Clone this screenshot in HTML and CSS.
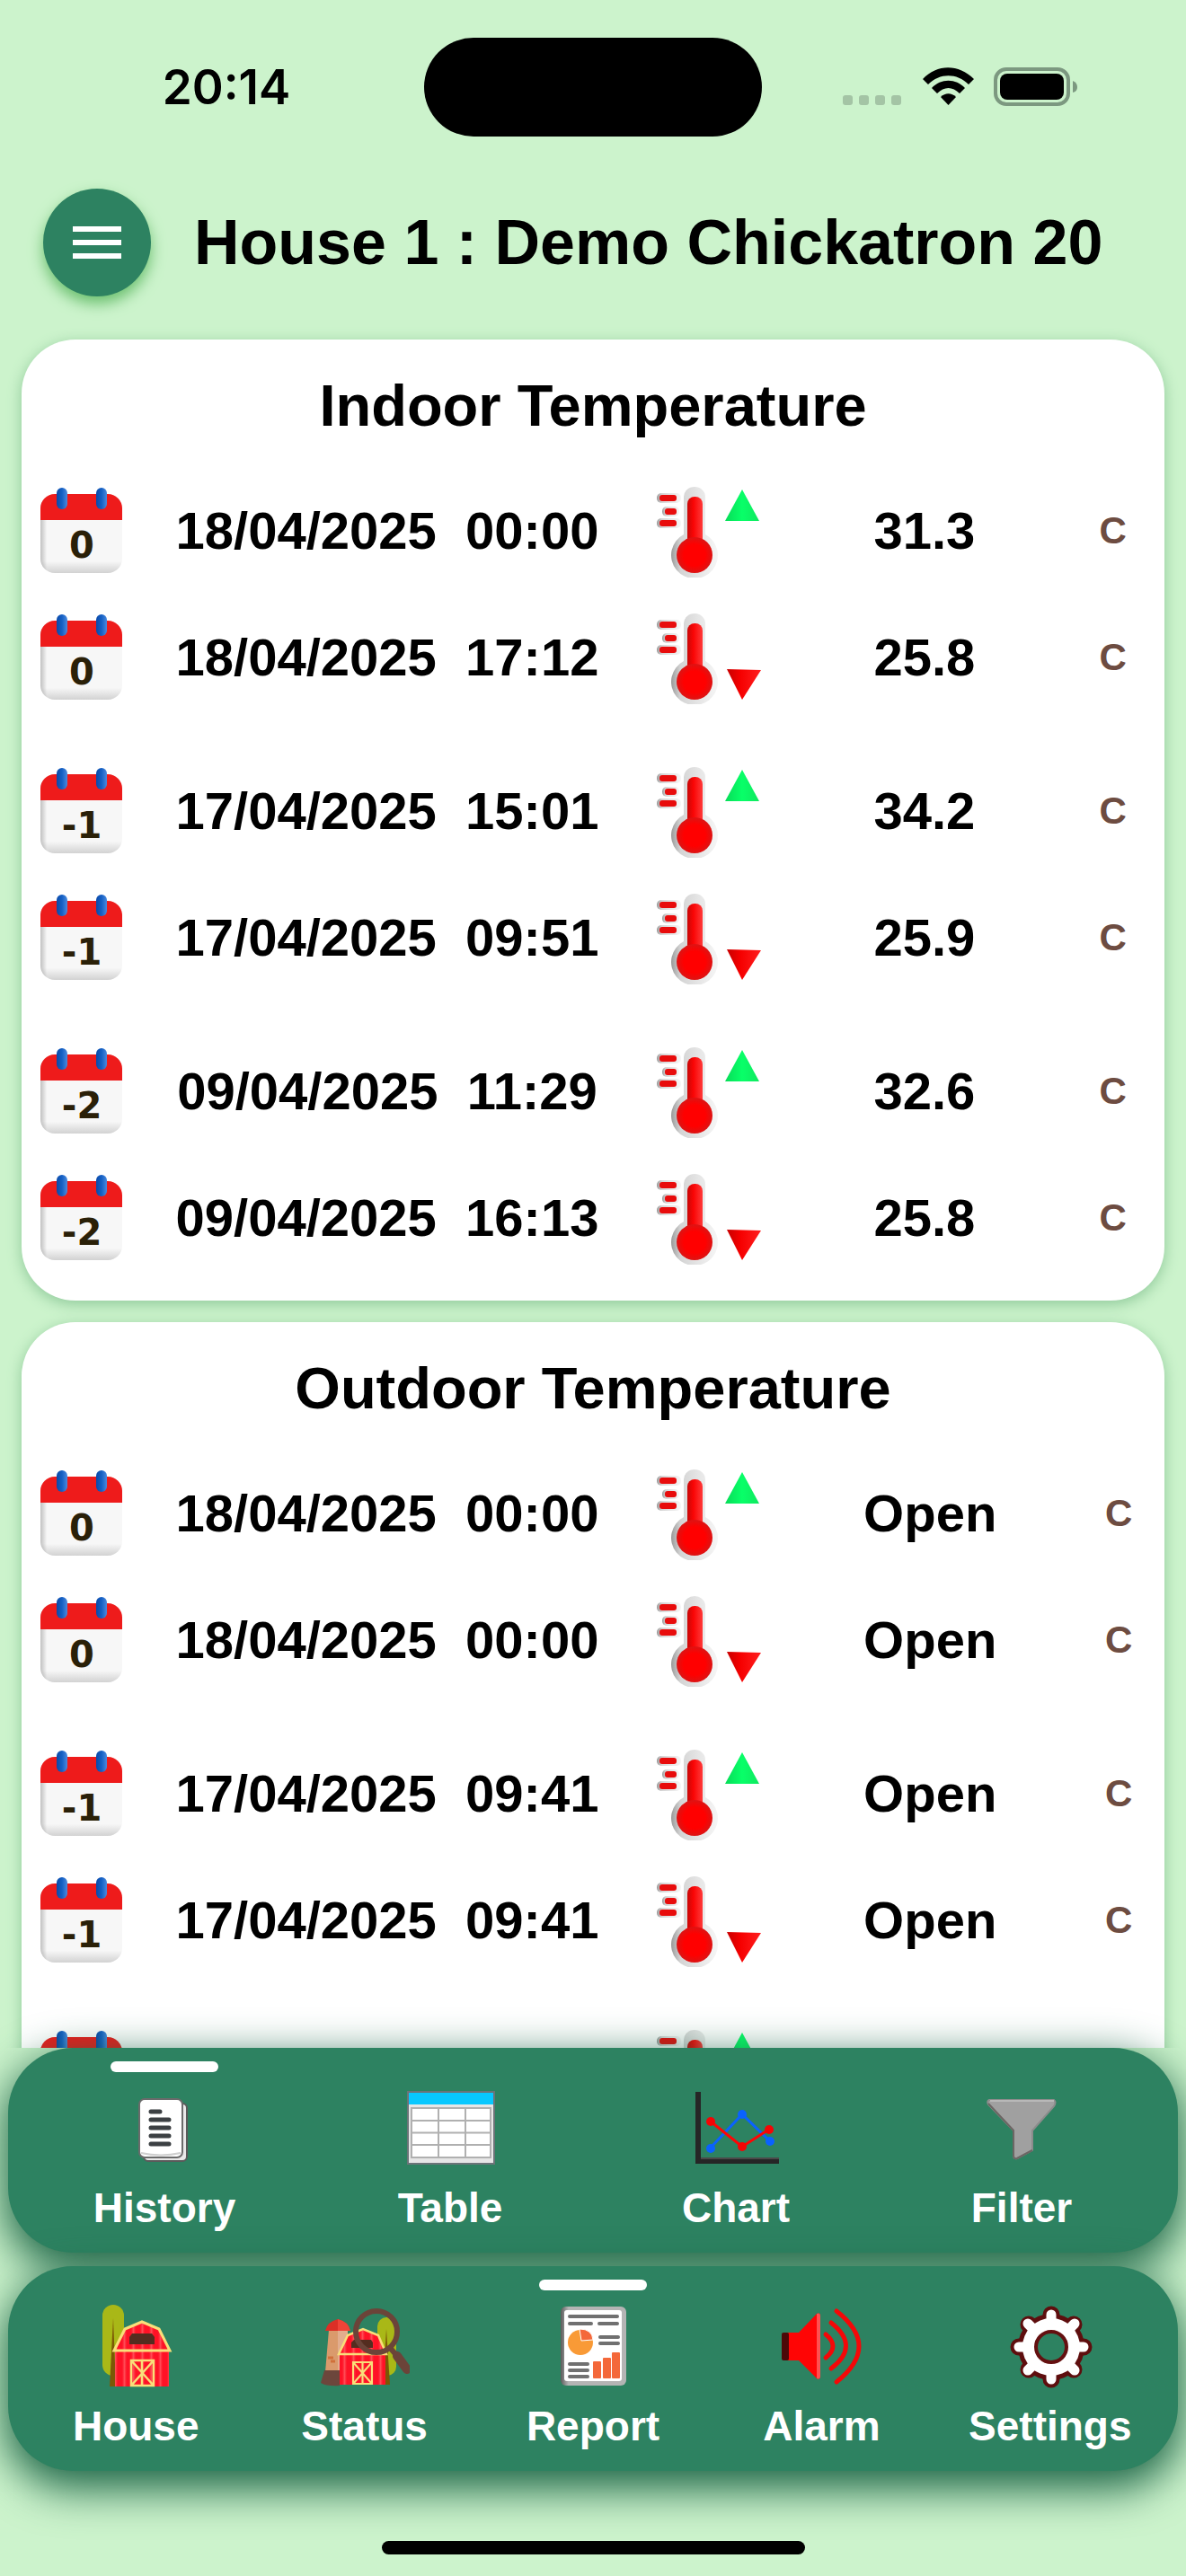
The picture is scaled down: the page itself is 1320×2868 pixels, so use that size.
FILE: index.html
```html
<!DOCTYPE html>
<html lang="en">
<head>
<meta charset="utf-8">
<meta name="viewport" content="width=device-width, initial-scale=1">
<title>House 1 : Demo Chickatron 20</title>
<link rel="stylesheet" href="styles.css">
</head>
<body>
<svg class="defs" aria-hidden="true">
  <defs>
    <linearGradient id="ring" x1="0" x2="1"><stop offset="0" stop-color="#0a49a8"/><stop offset=".5" stop-color="#1560c4"/><stop offset="1" stop-color="#4a8ade"/></linearGradient>
    <linearGradient id="paper" x1="0" y1="0" x2="0" y2="1"><stop offset=".85" stop-color="#f7f7f7"/><stop offset="1" stop-color="#d2d2d2"/></linearGradient>
    <linearGradient id="paperSide" x1="0" x2="1"><stop offset="0" stop-color="#000" stop-opacity=".22"/><stop offset=".08" stop-color="#000" stop-opacity="0"/></linearGradient>
    <linearGradient id="glass" x1="0" x2="1"><stop offset="0" stop-color="#9a9a9a"/><stop offset=".2" stop-color="#d4d4d4"/><stop offset=".6" stop-color="#e6e6e6"/><stop offset="1" stop-color="#f6f6f6"/></linearGradient>
    <radialGradient id="bulb"><stop offset=".6" stop-color="#ff0000"/><stop offset="1" stop-color="#dc1414"/></radialGradient>
    <linearGradient id="tube" x1="0" x2="1"><stop offset="0" stop-color="#c80808"/><stop offset=".4" stop-color="#fa0505"/><stop offset="1" stop-color="#ff3a3a"/></linearGradient>
    <linearGradient id="up" x1="0" x2="1"><stop offset="0" stop-color="#08dc58"/><stop offset=".5" stop-color="#08ff68"/><stop offset="1" stop-color="#10e860"/></linearGradient>
    <linearGradient id="down" x1="0" x2="1"><stop offset="0" stop-color="#c80000"/><stop offset=".4" stop-color="#f60000"/><stop offset="1" stop-color="#ff2020"/></linearGradient>
    <linearGradient id="barnRed" x1="0" x2="10" gradientUnits="userSpaceOnUse" spreadMethod="repeat"><stop offset=".1" stop-color="#ff1226"/><stop offset=".5" stop-color="#ff1226"/><stop offset=".75" stop-color="#ff4a54"/><stop offset="1" stop-color="#ff1226"/></linearGradient>
    <linearGradient id="frame" x1="0" x2="1"><stop offset="0" stop-color="#5c5c5c"/><stop offset=".12" stop-color="#b4b4b4"/><stop offset="1" stop-color="#b4b4b4"/></linearGradient>

    <symbol id="calendar" viewBox="0 0 92 96">
      <rect x="0" y="7" width="91" height="88" rx="16" fill="url(#paper)"/>
      <rect x="0" y="7" width="91" height="88" rx="16" fill="url(#paperSide)"/>
      <path d="M0 36V23A16 16 0 0 1 16 7H75A16 16 0 0 1 91 23V36Z" fill="#ee1b1b"/>
      <rect x="18" y="0" width="12" height="24" rx="6" fill="url(#ring)"/>
      <rect x="62" y="0" width="12" height="24" rx="6" fill="url(#ring)"/>
    </symbol>
    <symbol id="thermo" viewBox="0 0 118 104">
      <g fill="url(#glass)">
        <rect x="1" y="10" width="27" height="11" rx="5"/>
        <rect x="7" y="25" width="19" height="11" rx="5"/>
        <rect x="1" y="38" width="27" height="11" rx="5"/>
        <path d="M31 14A12 11 0 0 1 55 14V56A26 26 0 1 1 31 56Z"/>
      </g>
      <g fill="#e80c0c">
        <rect x="4" y="12" width="19" height="7" rx="3"/>
        <rect x="10" y="27" width="13" height="7" rx="3"/>
        <rect x="4" y="40" width="19" height="7" rx="3"/>
      </g>
      <rect x="35" y="14" width="17" height="56" rx="8" fill="url(#tube)"/>
      <circle cx="43" cy="79" r="20" fill="url(#bulb)"/>
    </symbol>
    <symbol id="high" viewBox="0 0 118 104">
      <use href="#thermo"/>
      <path d="M96 6L115 41H77Z" fill="url(#up)"/>
    </symbol>
    <symbol id="low" viewBox="0 0 118 104">
      <use href="#thermo"/>
      <path d="M79 65L117 66L96 99Z" fill="url(#down)"/>
    </symbol>
  </defs>
</svg>

<header class="status-bar">
  <time class="clock">20:14</time>
  <div class="island"></div>
  <div class="system-icons">
    <svg width="66" height="50" viewBox="0 0 66 50" fill="#a4c4a5"><rect x="0" y="34" width="11" height="11" rx="3"/><rect x="18" y="34" width="11" height="11" rx="3"/><rect x="36" y="34" width="11" height="11" rx="3"/><rect x="54" y="34" width="11" height="11" rx="3"/></svg>
    <svg width="58" height="50" viewBox="0 0 58 50"><path d="M1 16C17 -1 41 -1 58 16L52 22C39 9 20 9 7 22Z"/><path d="M11 26C21 15 38 15 48 26L42 32C34 24 25 24 17 32Z"/><path d="M21 36C26 31 33 31 38 36L29.500 45Z"/></svg>
    <svg width="94" height="50" viewBox="0 0 94 50"><rect x="2" y="5" width="81" height="39" rx="12" fill="none" stroke="#7c9880" stroke-width="4"/><rect x="7" y="10" width="71" height="29" rx="8"/><path d="M88 18Q93 20 93 25T88 31Z" fill="#7c9880"/></svg>
  </div>
</header>

<div class="title-bar">
  <button class="menu" type="button" aria-label="Menu"><span></span><span></span><span></span></button>
  <h1>House 1 : Demo Chickatron 20</h1>
</div>

<main class="readings">
  <section class="card">
    <h2>Indoor Temperature</h2>
    <table>
      <colgroup><col class="col-day"><col class="col-date"><col class="col-type"><col class="col-value"><col class="col-unit"></colgroup>
      <tbody>
        <tr><td><svg class="day"><use href="#calendar"/><text x="46" y="78">0</text></svg></td><td class="date">18/04/2025&nbsp; 00:00</td><td><svg class="type"><use href="#high"/></svg></td><td class="value">31.3</td><td class="unit">C</td></tr>
        <tr><td><svg class="day"><use href="#calendar"/><text x="46" y="78">0</text></svg></td><td class="date">18/04/2025&nbsp; 17:12</td><td><svg class="type"><use href="#low"/></svg></td><td class="value">25.8</td><td class="unit">C</td></tr>
      </tbody>
      <tbody>
        <tr><td><svg class="day"><use href="#calendar"/><text x="46" y="78">-1</text></svg></td><td class="date">17/04/2025&nbsp; 15:01</td><td><svg class="type"><use href="#high"/></svg></td><td class="value">34.2</td><td class="unit">C</td></tr>
        <tr><td><svg class="day"><use href="#calendar"/><text x="46" y="78">-1</text></svg></td><td class="date">17/04/2025&nbsp; 09:51</td><td><svg class="type"><use href="#low"/></svg></td><td class="value">25.9</td><td class="unit">C</td></tr>
      </tbody>
      <tbody>
        <tr><td><svg class="day"><use href="#calendar"/><text x="46" y="78">-2</text></svg></td><td class="date">09/04/2025&nbsp; 11:29</td><td><svg class="type"><use href="#high"/></svg></td><td class="value">32.6</td><td class="unit">C</td></tr>
        <tr><td><svg class="day"><use href="#calendar"/><text x="46" y="78">-2</text></svg></td><td class="date">09/04/2025&nbsp; 16:13</td><td><svg class="type"><use href="#low"/></svg></td><td class="value">25.8</td><td class="unit">C</td></tr>
      </tbody>
    </table>
  </section>

  <section class="card outdoor">
    <h2>Outdoor Temperature</h2>
    <table>
      <colgroup><col class="col-day"><col class="col-date"><col class="col-type"><col class="col-value"><col class="col-unit"></colgroup>
      <tbody>
        <tr><td><svg class="day"><use href="#calendar"/><text x="46" y="78">0</text></svg></td><td class="date">18/04/2025&nbsp; 00:00</td><td><svg class="type"><use href="#high"/></svg></td><td class="value">Open</td><td class="unit">C</td></tr>
        <tr><td><svg class="day"><use href="#calendar"/><text x="46" y="78">0</text></svg></td><td class="date">18/04/2025&nbsp; 00:00</td><td><svg class="type"><use href="#low"/></svg></td><td class="value">Open</td><td class="unit">C</td></tr>
      </tbody>
      <tbody>
        <tr><td><svg class="day"><use href="#calendar"/><text x="46" y="78">-1</text></svg></td><td class="date">17/04/2025&nbsp; 09:41</td><td><svg class="type"><use href="#high"/></svg></td><td class="value">Open</td><td class="unit">C</td></tr>
        <tr><td><svg class="day"><use href="#calendar"/><text x="46" y="78">-1</text></svg></td><td class="date">17/04/2025&nbsp; 09:41</td><td><svg class="type"><use href="#low"/></svg></td><td class="value">Open</td><td class="unit">C</td></tr>
      </tbody>
      <tbody>
        <tr><td><svg class="day"><use href="#calendar"/></svg></td><td></td><td><svg class="type"><use href="#high"/></svg></td><td></td><td></td></tr>
      </tbody>
    </table>
  </section>
</main>

<nav class="tabs">
  <a href="#history" class="active" aria-current="page">
    <svg viewBox="0 0 100 100">
      <rect x="27" y="22" width="48" height="64" rx="5" fill="#e9e9e9" stroke="#5a5a5a" stroke-width="2"/>
      <rect x="22" y="17" width="48" height="65" rx="6" fill="#fff" stroke="#6b6b6b" stroke-width="2"/>
      <path d="M24 77Q46 82 68 77" fill="none" stroke="#cfcfcf" stroke-width="2"/>
      <path d="M35 31H45M35 40H55M35 49H55M35 58H55M35 67H55" stroke="#3c4043" stroke-width="5" stroke-linecap="round"/>
    </svg>
    <span>History</span>
  </a>
  <a href="#table">
    <svg viewBox="0 0 100 100">
      <rect x="3" y="9" width="96" height="80" fill="#e6e6e6" stroke="#6b7478" stroke-width="2"/>
      <rect x="4" y="10" width="94" height="13" fill="#08c8ff"/>
      <rect x="7" y="27" width="88" height="55" fill="#fff" stroke="#b0b0b0" stroke-width="2"/>
      <path d="M7 41H95M7 54.500H95M7 68H95M37 27V82M67 27V82" stroke="#b0b0b0" stroke-width="2"/>
    </svg>
    <span>Table</span>
  </a>
  <a href="#chart">
    <svg viewBox="0 0 100 100">
      <path d="M8 9V86H98" fill="none" stroke="#262626" stroke-width="6"/>
      <path d="M11 83H98" stroke="#4a4a4a" stroke-width="2"/>
      <path d="M22 71L57 34L88 64" fill="none" stroke="#0a62ff" stroke-width="3"/>
      <path d="M22 42L57 70L88 50" fill="none" stroke="#ff0505" stroke-width="3"/>
      <g fill="#0a62ff"><circle cx="22" cy="72" r="5"/><circle cx="57" cy="34" r="5"/><circle cx="88" cy="64" r="5"/></g>
      <g fill="#f50505"><circle cx="22" cy="42" r="5"/><circle cx="57" cy="70" r="5"/><circle cx="87" cy="51" r="5"/></g>
    </svg>
    <span>Chart</span>
  </a>
  <a href="#filter">
    <svg viewBox="0 0 100 100">
      <path d="M14 18H86Q89 20 86 25L62 52V74L45 83Q41 84 41 80V52L13 23Q11 19 14 18Z" fill="#a0a0a0" stroke="#8c8c8c" stroke-width="2"/>
      <path d="M13 22L41 52V80Q41 84 45 83L62 74" fill="none" stroke="#6c6664" stroke-width="2"/>
      <path d="M15 19H86" stroke="#b8b8b8" stroke-width="2"/>
    </svg>
    <span>Filter</span>
  </a>
</nav>

<nav class="tabs">
  <a href="#house">
    <svg viewBox="0 0 100 100">
      <rect x="13" y="3" width="24" height="79" rx="12" fill="#a9b817"/>
      <path d="M25 18L28 94H21Z" fill="#7c5806"/>
      <path d="M27 94V54L39 29L57 21L76 29L87 54V94Z" fill="url(#barnRed)"/>
      <path d="M26 54L38 30L57 22L76 30L88 54Z" fill="none" stroke="#f9df79" stroke-width="3"/>
      <path d="M43 47V39L46 35H68L71 39V47Z" fill="#542d20"/>
      <path d="M45 65H70V93H45ZM57 65V93M45 65L70 93M70 65L45 93" fill="none" stroke="#f9df79" stroke-width="2.500"/>
    </svg>
    <span>House</span>
  </a>
  <a href="#status">
    <svg viewBox="0 0 100 100">
      <rect x="64" y="17" width="21" height="65" rx="10" fill="#a9b817"/>
      <path d="M74 30L78 92H70Z" fill="#7c5806"/>
      <path d="M10 31H31V78H6Z" fill="#da9a6c"/>
      <path d="M20 31H31V78H20Z" fill="#e2ad8e"/>
      <path d="M5 76H22V93Q8 94 1 90Z" fill="#6c463c"/>
      <path d="M6 32Q8 22 20 19Q32 22 34 32Z" fill="#dc2f26"/>
      <path d="M20 19Q32 22 34 32H20Z" fill="#f04438"/>
      <path d="M9 62H15M12 66H17" stroke="#d0703a" stroke-width="3"/>
      <path d="M22 92V58L31 37L48 30L65 37L73 58V92Z" fill="url(#barnRed)"/>
      <path d="M21 58L31 37L48 30L65 37L74 58Z" fill="none" stroke="#f9df79" stroke-width="2.500"/>
      <path d="M35 51V45L38 42H57L59 45V51Z" fill="#542d20"/>
      <path d="M37 67H58V91H37ZM47.500 67V91M37 67L58 91M58 67L37 91" fill="none" stroke="#f9df79" stroke-width="2"/>
      <circle cx="63" cy="33" r="23" fill="none" stroke="#6b4439" stroke-width="6"/>
      <path d="M79 52L86 60" stroke="#6b4439" stroke-width="6"/>
      <path d="M86 60L97 75" stroke="#6b4439" stroke-width="10" stroke-linecap="round"/>
    </svg>
    <span>Status</span>
  </a>
  <a href="#report" class="active" aria-current="page">
    <svg viewBox="0 0 100 100">
      <rect x="14" y="5" width="73" height="88" rx="6" fill="url(#frame)"/>
      <rect x="18" y="9" width="64" height="79" rx="3" fill="#fff"/>
      <path d="M24 16H77M24 24H48M57 24H77M58 39H78M58 46H78M24 69H44M24 76H44M24 83H44" stroke="#707070" stroke-width="4" stroke-linecap="round"/>
      <circle cx="36" cy="45" r="14" fill="#f99a36"/>
      <path d="M37 43L35 30Q49 30 50 42Z" fill="#f4683a" stroke="#fff" stroke-width="1"/>
      <g fill="#f4683a"><rect x="50" y="66" width="9" height="19" rx="1"/><rect x="61" y="62" width="9" height="23" rx="1"/><rect x="71" y="56" width="9" height="29" rx="1"/></g>
    </svg>
    <span>Report</span>
  </a>
  <a href="#alarm">
    <svg viewBox="0 0 100 100">
      <path d="M8 34H25L45 13Q49 11 49 16V82Q49 87 45 85L25 65H8Z" fill="#ff0505"/>
      <path d="M45 13Q49 11 49 16V82Q49 87 45 85Z" fill="#ff5050"/>
      <rect x="6" y="34" width="8" height="31" rx="2" fill="#4c0808"/>
      <path d="M55 36Q71 49 55 62M61 23Q94 49 61 74M67 10Q117 49 67 89" fill="none" stroke="#f40808" stroke-width="5" stroke-linecap="round"/>
    </svg>
    <span>Alarm</span>
  </a>
  <a href="#settings">
    <svg viewBox="0 0 100 100">
      <g transform="translate(51 50)">
        <circle r="37" fill="#5e0e0e"/>
        <path d="M0 -36V36M-36 0H36M-25 -25L25 25M25 -25L-25 25" stroke="#5e0e0e" stroke-width="19" stroke-linecap="round"/>
        <circle r="32" fill="#fff"/>
        <path d="M0 -36V36M-36 0H36M-26 -26L26 26M26 -26L-26 26" stroke="#fff" stroke-width="11" stroke-linecap="round"/>
        <circle r="17" fill="#2d8261" stroke="#641010" stroke-width="4"/>
      </g>
    </svg>
    <span>Settings</span>
  </a>
</nav>

<footer class="home-area"><div class="home-indicator"></div></footer>
</body>
</html>
```
FILE: styles.css
```css
* {
  box-sizing: border-box;
}

body {
  margin: 0;
  height: 100vh;
  display: flex;
  flex-direction: column;
  overflow: hidden;
  background: #ccf3cc;
  color: #000;
  font-family: "Liberation Sans", Arial, sans-serif;
  font-weight: 700;
}

.defs {
  position: absolute;
  width: 0;
  height: 0;
}

/* Status bar */
.status-bar {
  flex: none;
  display: grid;
  grid-template-columns: 1fr 376px 1fr;
  align-items: center;
  padding: 42px 0;
}

.clock {
  padding-left: 32px;
  text-align: center;
  font-family: Inter, sans-serif;
  font-size: 53px;
  font-weight: 600;
  line-height: 64px;
}

.island {
  height: 110px;
  border-radius: 55px;
  background: #000;
}

.system-icons {
  display: flex;
  justify-content: flex-end;
  gap: 22px;
  padding-right: 120px;
}

/* Title bar */
.title-bar {
  flex: none;
  display: flex;
  align-items: center;
  gap: 48px;
  padding: 16px 48px 48px;
}

.menu {
  flex: none;
  display: flex;
  flex-direction: column;
  align-items: center;
  justify-content: center;
  gap: 9px;
  width: 120px;
  height: 120px;
  padding: 0;
  border: 0;
  border-radius: 50%;
  background: #2d8261;
  box-shadow: 0 8px 16px #6cc070;
}

.menu span {
  width: 54px;
  height: 6px;
  background: #fff;
}

h1 {
  margin: 0;
  font-size: 70px;
  line-height: 80px;
  white-space: nowrap;
}

/* Reading cards */
.readings {
  flex: 1;
  min-height: 0;
  display: flex;
  flex-direction: column;
  gap: 24px;
  margin-top: -24px;
  padding: 24px 24px 0;
  overflow: hidden;
}

.card {
  flex: none;
  padding: 34px 0 22px;
  border-radius: 60px;
  background: #fff;
  box-shadow: 0 4px 16px #8fc99a;
}

h2 {
  margin: 0 0 28px;
  text-align: center;
  font-size: 65px;
  line-height: 80px;
}

table {
  width: 100%;
  table-layout: fixed;
  border-collapse: collapse;
}

td {
  height: 141px;
  padding: 0;
  text-align: center;
  white-space: nowrap;
}

tbody + tbody tr:first-child td {
  height: 171px;
  padding-top: 30px;
}

.col-day { width: 11%; }
.col-date { width: 42%; }
.col-type { width: 14%; }
.col-value { width: 24%; }
.col-unit { width: 9%; }

.outdoor .col-value { width: 25%; }
.outdoor .col-unit { width: 8%; }

td svg {
  display: block;
}

.day {
  width: 92px;
  height: 96px;
  margin-left: 21px;
}

.day text {
  font-family: "DejaVu Sans", sans-serif;
  font-size: 40px;
  font-weight: 700;
  text-anchor: middle;
  fill: #2a2008;
}

.type {
  width: 118px;
  height: 104px;
  margin-left: 32px;
}

.date,
.value {
  font-size: 58px;
  line-height: 64px;
}

.unit {
  color: #6d4c41;
  font-size: 42px;
  line-height: 48px;
}

/* Bottom navigation */
.tabs {
  flex: none;
  position: relative;
  display: flex;
  margin: 0 9px 15px;
  padding: 0 15px;
  border-radius: 72px;
  background: #2d8261;
  box-shadow: 0 16px 48px 4px #1c6446;
}

.tabs a {
  flex: 1 1 0;
  display: flex;
  flex-direction: column;
  align-items: center;
  height: 228px;
  color: #fff;
  font-size: 46px;
  line-height: 56px;
  text-decoration: none;
}

.tabs a::before {
  content: "";
  width: 120px;
  height: 12px;
  margin: 15px 0 13px;
  border-radius: 6px;
}

.tabs .active::before {
  background: #fff;
}

.tabs svg {
  width: 100px;
  height: 100px;
  margin-bottom: 10px;
}

/* Home indicator */
.home-area {
  flex: none;
  display: flex;
  justify-content: center;
  padding: 63px 0 24px;
}

.home-indicator {
  width: 471px;
  height: 15px;
  border-radius: 8px;
  background: #000;
}
```
